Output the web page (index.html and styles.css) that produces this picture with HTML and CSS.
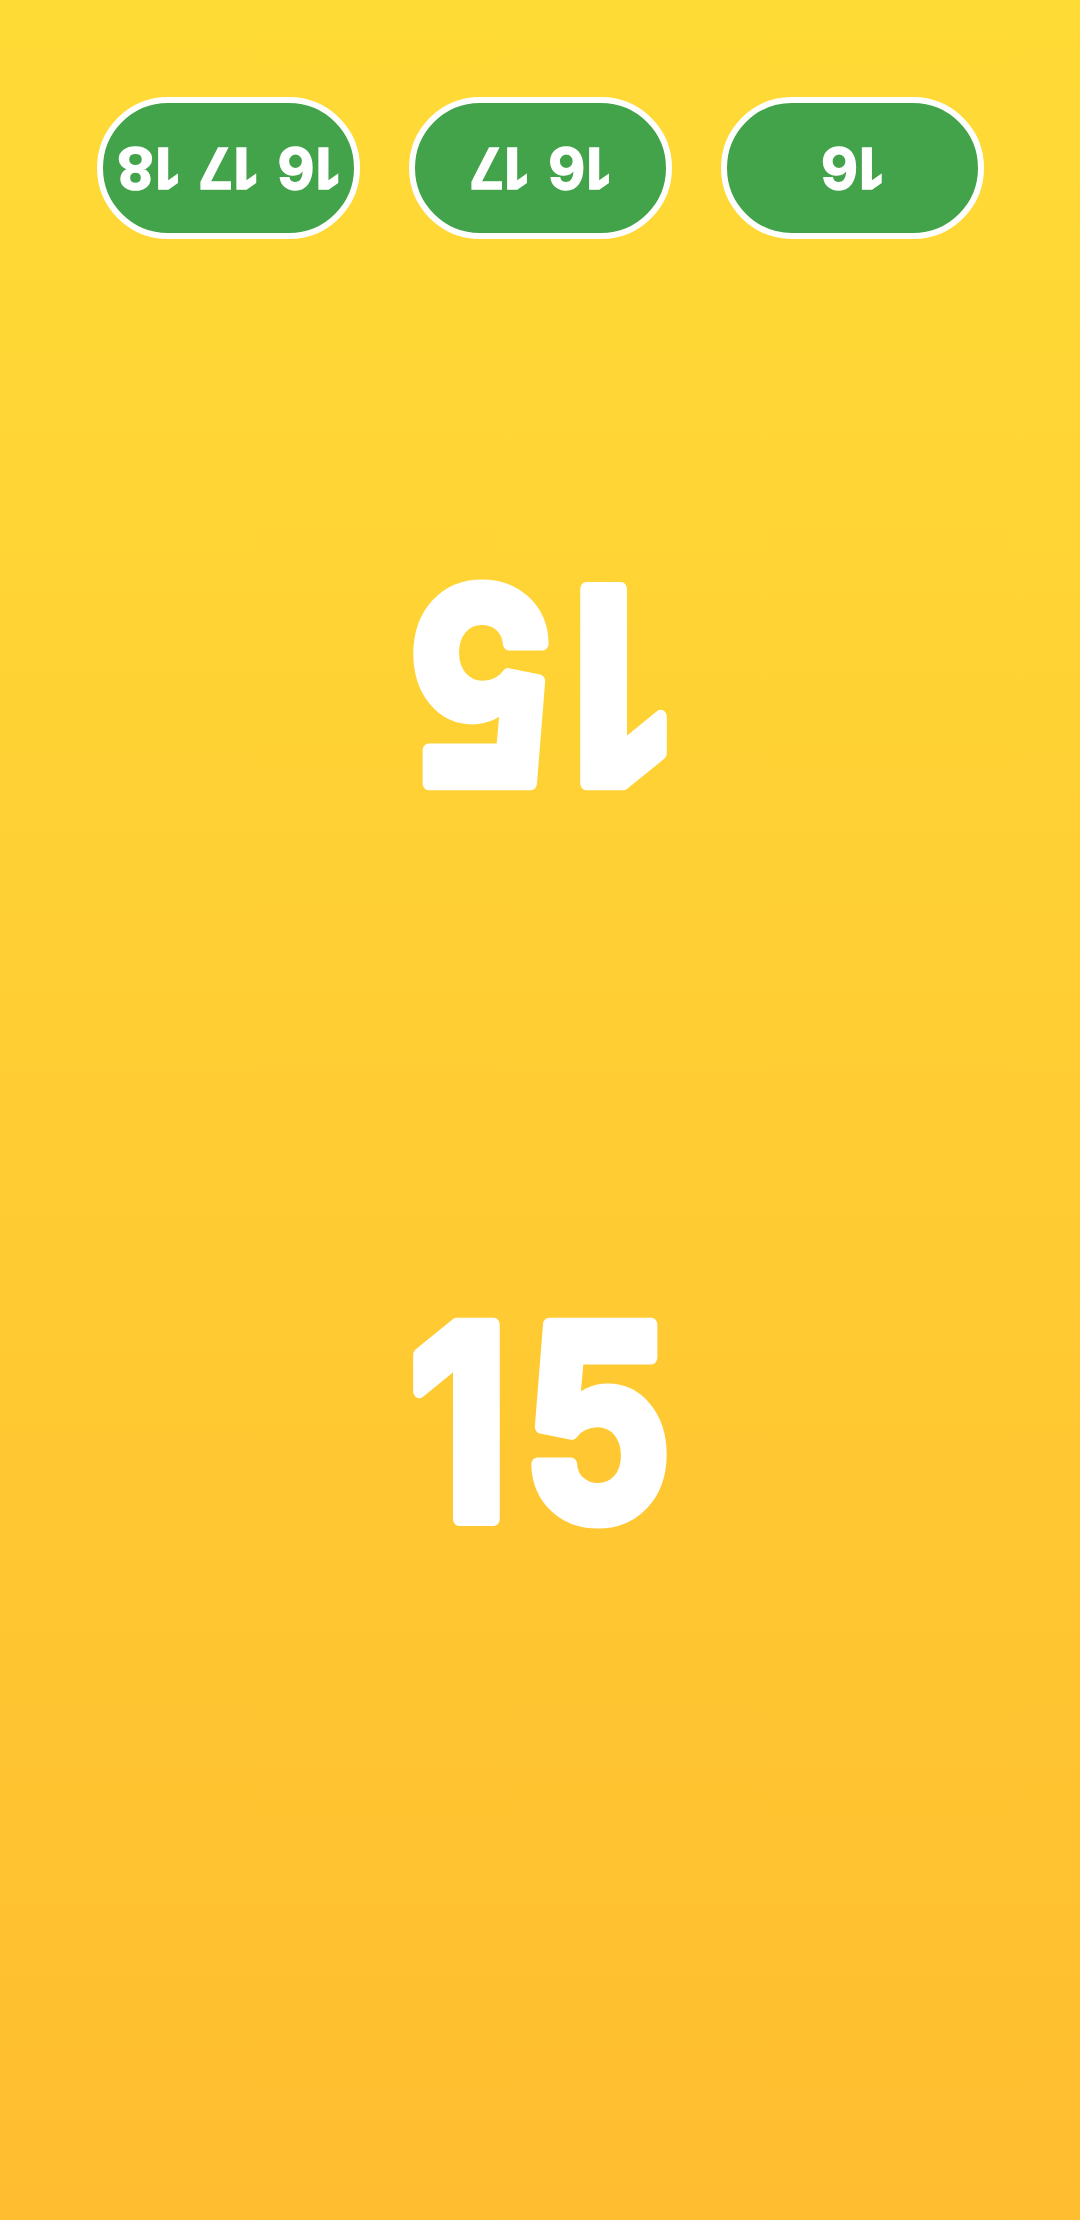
FILE: index.html
```html
<!DOCTYPE html>
<html>
<head>
<meta charset="utf-8">
<link rel="stylesheet" href="styles.css">
</head>
<body>
<div class="screen">
  <div class="pills">
    <div class="pill"><span class="pill-text">16 17 18</span></div>
    <div class="pill"><span class="pill-text">16 17</span></div>
    <div class="pill"><span class="pill-text">16</span></div>
  </div>
  <div class="zone zone-top">
    <svg class="big flipped" width="400" height="260" viewBox="0 0 400 260"><text x="208" y="230" text-anchor="middle">15</text></svg>
  </div>
  <div class="zone zone-bottom">
    <svg class="big" width="400" height="260" viewBox="0 0 400 260"><text x="208" y="230" text-anchor="middle">15</text></svg>
  </div>
</div>
</body>
</html>
```
FILE: styles.css
```css
html, body {
  margin: 0;
  padding: 0;
}
body {
  width: 1080px;
  height: 2220px;
  overflow: hidden;
  font-family: Inter, Roboto, sans-serif;
}
.screen {
  width: 1080px;
  height: 2220px;
  background: linear-gradient(to bottom, #ffdb36 0%, #ffcd33 50%, #ffbd2f 100%);
  display: flex;
  flex-direction: column;
}
.pills {
  display: flex;
  justify-content: center;
  gap: 49px;
  padding-top: 97px;
}
.pill {
  box-sizing: border-box;
  width: 263px;
  height: 142px;
  border-radius: 71px;
  border: 6px solid #ffffff;
  background: #43a34a;
  display: flex;
  align-items: center;
  justify-content: center;
}
.pill-text {
  color: #ffffff;
  font-family: Inter, Roboto, sans-serif;
  font-weight: 700;
  font-size: 57px;
  letter-spacing: 1px;
  word-spacing: 4px;
  -webkit-text-stroke: 1.5px #ffffff;
  transform: rotate(180deg);
  display: block;
  line-height: 1;
  white-space: nowrap;
}
.zone {
  display: flex;
  align-items: center;
  justify-content: center;
  flex: none;
}
.zone-top {
  height: 900px;
}
.zone-bottom {
  height: 560px;
}
.big {
  display: block;
  overflow: visible;
  transform: scaleX(0.87);
}
.big text {
  font-family: Inter, Roboto, sans-serif;
  font-weight: 700;
  font-size: 267px;
  letter-spacing: 16px;
  fill: #ffffff;
  stroke: #ffffff;
  stroke-width: 14px;
  stroke-linejoin: round;
  stroke-linecap: round;
}
.big.flipped {
  transform: rotate(180deg) scaleX(0.87);
}
```
